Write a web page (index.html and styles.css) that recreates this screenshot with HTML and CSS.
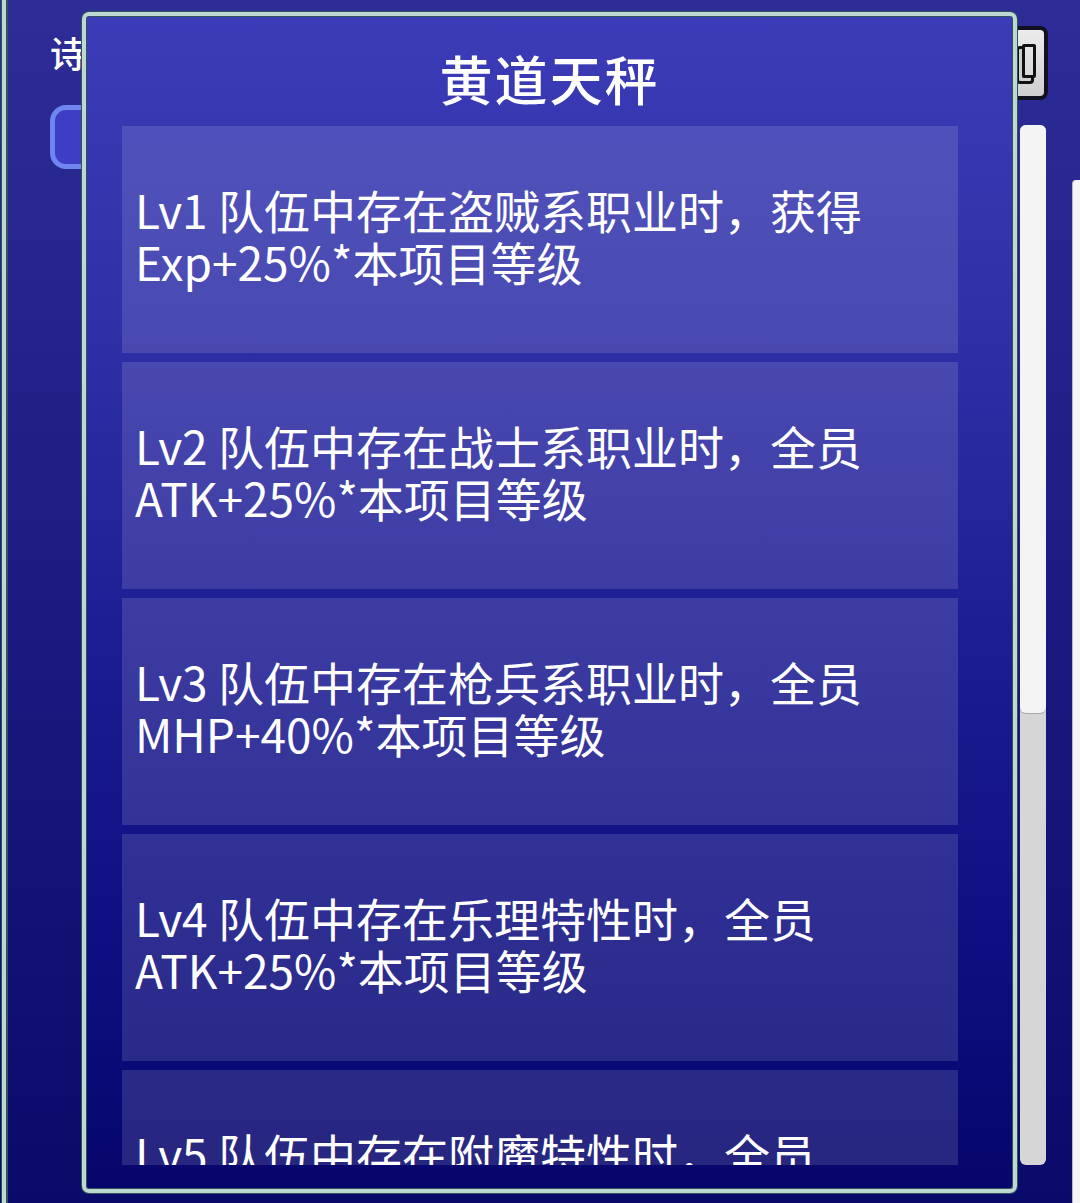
FILE: index.html
```html
<!DOCTYPE html>
<html lang="zh-CN">
<head>
    <meta charset="UTF-8">
    <meta name="viewport" content="width=device-width, initial-scale=1.0">
    <title>黄道天秤</title>
    <link rel="stylesheet" href="styles.css">
</head>
<body>
    <div class="screen">
        <div class="backdrop">
            <div class="back-left">
                <div class="back-label">诗</div>
                <div class="back-round"></div>
            </div>
            <div class="back-right">
                <div class="back-button">
                    <span class="back-icon"></span>
                </div>
                <div class="back-scroll">
                    <div class="back-thumb"></div>
                </div>
            </div>
            <div class="back-edge"></div>
        </div>

        <div class="modal">
            <h1 class="modal-title">黄道天秤</h1>
            <div class="level-list">
                <div class="level-card">
                    <p>Lv1 队伍中存在盗贼系职业时，获得<br>Exp+25%*本项目等级</p>
                </div>
                <div class="level-card">
                    <p>Lv2 队伍中存在战士系职业时，全员<br>ATK+25%*本项目等级</p>
                </div>
                <div class="level-card">
                    <p>Lv3 队伍中存在枪兵系职业时，全员<br>MHP+40%*本项目等级</p>
                </div>
                <div class="level-card">
                    <p>Lv4 队伍中存在乐理特性时，全员<br>ATK+25%*本项目等级</p>
                </div>
                <div class="level-card">
                    <p>Lv5 队伍中存在附魔特性时，全员<br>ATK+25%*本项目等级</p>
                </div>
            </div>
        </div>
    </div>
</body>
</html>
```

FILE: styles.css
```css
:root {
    --frame-light: #bcd8d0;
    --frame-dark: #34525a;
    --text: #ffffff;
    --font: "Noto Sans CJK SC", "Noto Sans", sans-serif;
}

* {
    margin: 0;
    padding: 0;
    box-sizing: border-box;
}

body {
    width: 1080px;
    height: 1203px;
    overflow: hidden;
    font-family: var(--font);
    color: var(--text);
    background: #0a0a6c;
}

.screen {
    position: relative;
    width: 1080px;
    height: 1203px;
    padding-left: 2px;
    background: linear-gradient(180deg, #2e2c96 0%, #24228a 30%, #16157a 65%, #0a0a6a 100%);
}

/* the page behind the popup */
.backdrop {
    display: flex;
    justify-content: space-between;
    height: 100%;
    padding-left: 8px;
    border-left: 4px solid var(--frame-light);
    box-shadow: inset 2px 0 0 var(--frame-dark), -1px 0 0 var(--frame-dark);
}

.back-left {
    padding: 30px 0 0 36px;
}

.back-label {
    font-size: 36px;
    line-height: 44px;
    font-weight: 500;
}

.back-round {
    margin-top: 31px;
    width: 70px;
    height: 64px;
    border: 5px solid #6f86f0;
    border-radius: 16px;
    background: #3d3dc6;
}

.back-right {
    display: flex;
    flex-direction: column;
    align-items: flex-start;
    padding-top: 26px;
    margin-right: 32px;
}

.back-button {
    width: 46px;
    height: 74px;
    margin-left: -10px;
    border: 4px solid #111122;
    border-radius: 8px;
    background: linear-gradient(180deg, #ececec, #cfcfcf);
    position: relative;
}

.back-icon {
    position: absolute;
    right: 8px;
    top: 14px;
    width: 14px;
    height: 34px;
    border: 3px solid #111;
    border-radius: 2px;
    box-shadow: -4px 4px 0 -1px #cfcfcf, -4px 4px 0 2px #111;
}

.back-scroll {
    margin-top: 25px;
    margin-left: 8px;
    width: 26px;
    height: 1040px;
    border-radius: 6px;
    background: #d6d6d6;
    overflow: hidden;
}

.back-thumb {
    height: 588px;
    background: #f4f4f4;
    border-radius: 0 0 6px 6px;
    box-shadow: 0 1px 0 #a8a8a8;
}

.back-edge {
    position: absolute;
    right: 0;
    top: 180px;
    width: 8px;
    height: 1023px;
    background: #f4f4f4;
    border-left: 1px solid #b8b8c4;
    border-radius: 4px 0 0 0;
}

/* popup */
.modal {
    position: absolute;
    left: 82px;
    top: 12px;
    width: 935px;
    height: 1181px;
    display: flex;
    flex-direction: column;
    border: 4px solid var(--frame-light);
    border-radius: 7px;
    background: linear-gradient(180deg, #3c3cb8 0%, #3030a8 25%, #1c1c92 55%, #0e0e80 80%, #06066c 100%);
    box-shadow: 0 0 0 1px var(--frame-dark), inset 0 0 0 1px var(--frame-dark);
}

.modal-title {
    flex: none;
    height: 110px;
    padding-top: 14px;
    text-align: center;
    font-size: 53px;
    line-height: 96px;
    font-weight: 500;
    letter-spacing: 2px;
}

.level-list {
    display: flex;
    flex-direction: column;
    gap: 9px;
    height: 1039px;
    margin: 0 55px 0 36px;
    overflow: hidden;
}

.level-card {
    flex: none;
    display: flex;
    align-items: center;
    height: 227px;
    padding: 0 0 10px 13px;
    background: rgba(255, 255, 255, 0.13);
}

.level-card p {
    font-size: 46px;
    line-height: 52px;
    font-weight: 400;
}
```
